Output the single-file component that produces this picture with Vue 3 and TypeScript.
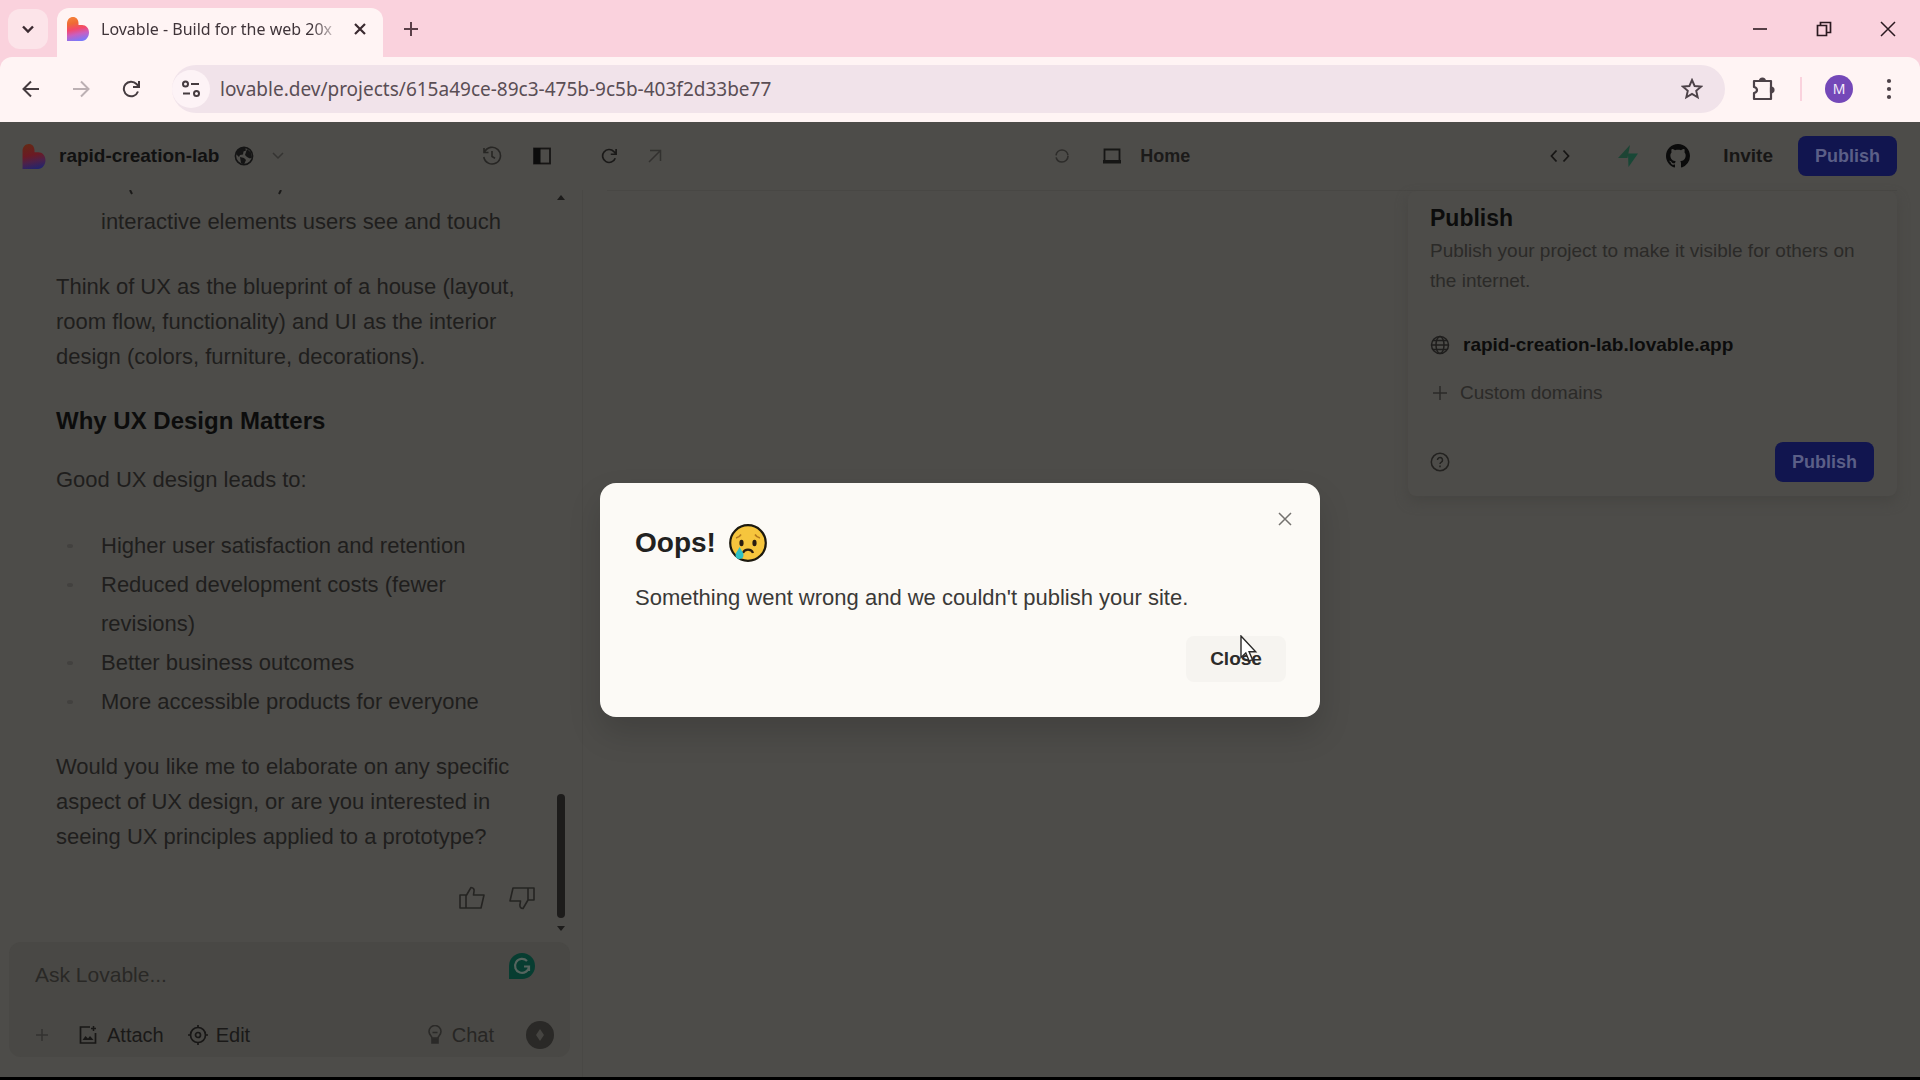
<script setup lang="ts">
import { ref } from 'vue'

const address = ref('lovable.dev/projects/615a49ce-89c3-475b-9c5b-403f2d33be77')
const prompt = ref('')
const dialogOpen = ref(true)

const benefits: string[] = [
  'Higher user satisfaction and retention',
  'Reduced development costs (fewer revisions)',
  'Better business outcomes',
  'More accessible products for everyone',
]
</script>

<template>
  <div class="window">
    <svg width="0" height="0" class="defs" aria-hidden="true">
      <defs>
        <linearGradient id="heart" x1="0.3" y1="0" x2="0.5" y2="1">
          <stop offset="0" stop-color="#f5803a" />
          <stop offset="0.25" stop-color="#ee6a35" />
          <stop offset="0.5" stop-color="#f4486c" />
          <stop offset="0.72" stop-color="#c95fc0" />
          <stop offset="1" stop-color="#7a78fa" />
        </linearGradient>
        <linearGradient id="heartDim" x1="0.3" y1="0" x2="0.5" y2="1">
          <stop offset="0" stop-color="#652815" />
          <stop offset="0.45" stop-color="#6b1a24" />
          <stop offset="0.7" stop-color="#4e2148" />
          <stop offset="1" stop-color="#25246b" />
        </linearGradient>
      </defs>
    </svg>

    <div class="tabstrip">
      <button class="tab-search" aria-label="Search tabs">
        <svg width="14" height="14" viewBox="0 0 14 14"><path d="M2 4.500l5 5 5-5" fill="none" stroke="#3a2a30" stroke-width="2.400" /></svg>
      </button>
      <div class="tab">
        <svg width="22" height="24" viewBox="0 0 22 24"><path d="M0 6.500C0 2.700 2.700 0 6 0s5.500 2.500 5.500 6.500V8h3.600C19 8 22 11.200 22 15.600S19 24 15 24H0z" fill="url(#heart)" /></svg>
        <span class="tab-title">Lovable - Build for the web 20x</span>
        <button class="plain" aria-label="Close tab">
          <svg width="14" height="14" viewBox="0 0 14 14"><path d="M2 2l10 10M12 2L2 12" stroke="#3a2a30" stroke-width="2.200" /></svg>
        </button>
      </div>
      <button class="plain new-tab" aria-label="New tab">
        <svg width="16" height="16" viewBox="0 0 16 16"><path d="M8 1v14M1 8h14" stroke="#5a3f48" stroke-width="2" /></svg>
      </button>
      <div class="win-buttons">
        <button class="plain" aria-label="Minimize"><svg width="16" height="16" viewBox="0 0 16 16"><path d="M1 8h14" stroke="#2b1a20" stroke-width="1.600" /></svg></button>
        <button class="plain" aria-label="Restore"><svg width="16" height="16" viewBox="0 0 16 16"><path d="M1.500 4.500h9v10h-9zM4.500 4.500v-3h10v10h-4" fill="none" stroke="#2b1a20" stroke-width="1.700" /></svg></button>
        <button class="plain" aria-label="Close window"><svg width="16" height="16" viewBox="0 0 16 16"><path d="M1 1l14 14M15 1L1 15" stroke="#2b1a20" stroke-width="1.500" /></svg></button>
      </div>
    </div>

    <div class="toolbar">
      <div class="nav">
        <button class="plain" aria-label="Back"><svg width="18" height="18" viewBox="0 0 18 18"><path d="M17 9H2M9 1.500L1.500 9 9 16.500" fill="none" stroke="#453b3f" stroke-width="2" /></svg></button>
        <button class="plain" aria-label="Forward"><svg width="18" height="18" viewBox="0 0 18 18"><path d="M1 9h15M9 1.500L16.500 9 9 16.500" fill="none" stroke="#bcb0b3" stroke-width="2" /></svg></button>
        <button class="plain" aria-label="Reload"><svg width="18" height="18" viewBox="0 0 18 18"><path d="M16 11.500A7.300 7.300 0 1 1 14.500 4L17 6.500M17 1v6h-6" fill="none" stroke="#453b3f" stroke-width="2" /></svg></button>
      </div>
      <div class="omnibox">
        <button class="site-info" aria-label="Site information">
          <svg width="20" height="18" viewBox="0 0 20 18" fill="none" stroke="#453b3f" stroke-width="2"><circle cx="4.500" cy="4" r="2.500" /><path d="M10 4h8M2 13.500h7" /><circle cx="15.500" cy="13.500" r="2.500" /></svg>
        </button>
        <input v-model="address" class="url" aria-label="Address" />
        <button class="plain" aria-label="Bookmark"><svg width="22" height="22" viewBox="0 0 22 22"><path d="M11 2l2.600 6 6.600.5-5 4.300 1.500 6.500L11 15.900l-5.700 3.400 1.500-6.500-5-4.300 6.600-.5z" fill="none" stroke="#4d4248" stroke-width="1.900" /></svg></button>
      </div>
      <div class="extras">
        <button class="plain" aria-label="Extensions"><svg width="24" height="24" viewBox="0 0 24 24" fill="none" stroke="#4d4248" stroke-width="2.200" stroke-linejoin="round"><path d="M2 4h17v18H2v-6c4-1 4-5 0-6z" /><path d="M8 4a2.500 2.500 0 0 1 5 0zM19 10.500a2.500 2.500 0 0 1 0 5z" fill="#4d4248" /></svg></button>
        <span class="divider"></span>
        <button class="avatar" aria-label="Profile">M</button>
        <button class="plain menu" aria-label="Menu"><svg width="6" height="22" viewBox="0 0 6 22" fill="#4d4248"><circle cx="3" cy="3" r="2.100" /><circle cx="3" cy="11" r="2.100" /><circle cx="3" cy="19" r="2.100" /></svg></button>
      </div>
    </div>

    <main class="page">
      <header class="head">
        <div class="head-left">
          <svg width="24" height="25" viewBox="0 0 22 24"><path d="M0 6.500C0 2.700 2.700 0 6 0s5.500 2.500 5.500 6.500V8h3.600C19 8 22 11.200 22 15.600S19 24 15 24H0z" fill="url(#heartDim)" /></svg>
          <span class="project">rapid-creation-lab</span>
          <svg class="earth" width="20" height="20" viewBox="0 0 20 20"><circle cx="10" cy="10" r="8.600" fill="none" stroke="#151515" stroke-width="1.600" /><path d="M2 8C3 3 7 1 11 1.500l1 3-2.500 1L9 8.500 6 9l-1 2zM13 3l4 3.500 1 5-2 1-3-1.500-2-2 1-3zM6 11l4 1 2 2-2 4.500-3-1.500z" fill="#151515" /></svg>
          <svg class="caret" width="12" height="8" viewBox="0 0 12 8"><path d="M1 1l5 5 5-5" fill="none" stroke="#353432" stroke-width="1.500" /></svg>
          <button class="plain push" aria-label="History"><svg width="20" height="20" viewBox="0 0 20 20" fill="none" stroke="#272624" stroke-width="1.600"><path d="M2.500 6a8.400 8.400 0 1 1-.7 5M2 2v4.500h4.500" /><path d="M10 5v5.500l3 1.800" /></svg></button>
          <button class="plain" aria-label="Toggle panel"><svg width="18" height="18" viewBox="0 0 18 18"><rect x="1" y="1.500" width="16" height="15" fill="none" stroke="#171615" stroke-width="1.800" /><path d="M1 1h6.500v16H1z" fill="#0c0c0c" /></svg></button>
        </div>
        <div class="head-mid">
          <button class="plain" aria-label="Refresh preview"><svg width="16" height="16" viewBox="0 0 18 18"><path d="M16 11.500A7.300 7.300 0 1 1 14.500 4L17 6.500M17 1v6h-6" fill="none" stroke="#1a1918" stroke-width="1.900" /></svg></button>
          <button class="plain ext" aria-label="Open preview"><svg width="14" height="14" viewBox="0 0 14 14"><path d="M2 1.500h10.500V12M12.500 1.500L1 13" fill="none" stroke="#32312f" stroke-width="1.500" /></svg></button>
          <svg class="spin" width="16" height="16" viewBox="0 0 16 16"><circle cx="8" cy="8" r="6" fill="none" stroke="#2d2c2a" stroke-width="1.600" stroke-dasharray="17 2" /></svg>
          <svg class="screen" width="18" height="16" viewBox="0 0 18 16"><path d="M1.500 1.500h15v12h-15z" fill="none" stroke="#161615" stroke-width="1.800" /><path d="M0 12h18v3.500H0z" fill="#161615" /></svg>
          <span class="route">Home</span>
        </div>
        <div class="head-right">
          <button class="plain" aria-label="Code"><svg width="20" height="14" viewBox="0 0 20 14"><path d="M6.500 1.500L1.500 7l5 5.500M13.500 1.500l5 5.500-5 5.500" fill="none" stroke="#171615" stroke-width="1.800" /></svg></button>
          <button class="plain bolt" aria-label="Supabase"><svg width="22" height="22" viewBox="0 0 22 22"><path d="M13 0L1 13h9.500z" fill="#1d4434" /><path d="M11.500 22L21 8.500H11z" fill="#194736" /></svg></button>
          <button class="plain" aria-label="GitHub"><svg width="24" height="24" viewBox="0 0 16 16"><path fill="#0b0b0b" d="M8 0C3.580 0 0 3.580 0 8c0 3.540 2.290 6.530 5.470 7.590.4.070.55-.17.55-.38 0-.19-.01-.82-.01-1.490-2.010.37-2.530-.49-2.690-.94-.09-.23-.48-.94-.82-1.130-.28-.15-.68-.52-.01-.53.63-.01 1.080.58 1.230.82.72 1.210 1.870.87 2.330.66.070-.52.28-.87.51-1.070-1.780-.2-3.640-.89-3.640-3.950 0-.87.31-1.590.82-2.150-.08-.2-.36-1.020.08-2.120 0 0 .67-.21 2.200.82.64-.18 1.320-.27 2-.27s1.360.09 2 .27c1.530-1.040 2.200-.82 2.200-.82.44 1.100.16 1.920.08 2.120.51.56.82 1.270.82 2.150 0 3.070-1.870 3.750-3.650 3.950.29.25.54.73.54 1.480 0 1.070-.01 1.930-.01 2.200 0 .21.15.46.55.38A8.010 8.010 0 0 0 16 8c0-4.420-3.580-8-8-8z" /></svg></button>
          <button class="plain invite">Invite</button>
          <button class="primary">Publish</button>
        </div>
      </header>

      <div class="body">
        <aside class="chat">
          <div class="scroller">
            <article class="message">
              <svg class="clipped" width="200" height="12" viewBox="0 0 200 12" aria-hidden="true"><path d="M29 0l2 4M178 4l2-4" stroke="#1b1a19" stroke-width="2" /></svg>
              <ul><li>interactive elements users see and touch</li></ul>
              <p>Think of UX as the blueprint of a house (layout, room flow, functionality) and UI as the interior design (colors, furniture, decorations).</p>
              <h3>Why UX Design Matters</h3>
              <p class="lead">Good UX design leads to:</p>
              <ul class="dots"><li v-for="b in benefits" :key="b">{{ b }}</li></ul>
              <p>Would you like me to elaborate on any specific aspect of UX design, or are you interested in seeing UX principles applied to a prototype?</p>
              <div class="votes">
                <button class="plain" aria-label="Good response"><svg width="26" height="24" viewBox="0 0 26 24" fill="none" stroke="#252422" stroke-width="1.600" stroke-linejoin="round"><path d="M1 9h6v13H1zM7 10l5-8.500c2.500 0 3.500 2 3 4L14.500 9H25l-3 13H7" /></svg></button>
                <button class="plain" aria-label="Bad response"><svg width="26" height="24" viewBox="0 0 26 24" fill="none" stroke="#252422" stroke-width="1.600" stroke-linejoin="round"><path d="M25 2h-6v12h6zM19 14l-5 8.500c-2.500 0-3.500-2-3-4l.5-3.500H1L4 2h15" /></svg></button>
              </div>
            </article>
            <div class="track" aria-hidden="true">
              <i class="up"></i>
              <i class="thumb"></i>
              <i class="down"></i>
            </div>
          </div>

          <form class="composer" @submit.prevent>
            <div class="composer-top">
              <input v-model="prompt" class="ask" placeholder="Ask Lovable..." aria-label="Ask Lovable" />
              <svg width="26" height="26" viewBox="0 0 26 26"><path d="M13 0a13 13 0 1 1 0 26H0V13A13 13 0 0 1 13 0z" fill="#073d31" /><path d="M18 8a7 7 0 1 0 2 5.500h-5M20 13.500V18" fill="none" stroke="#55645e" stroke-width="2.200" /></svg>
            </div>
            <div class="composer-row">
              <button class="plain" aria-label="Add"><svg width="14" height="14" viewBox="0 0 14 14"><path d="M7 1v12M1 7h12" stroke="#333230" stroke-width="1.500" /></svg></button>
              <button class="plain tool attach"><svg width="18" height="20" viewBox="0 0 18 20"><path d="M11 2H1.500v16h15V8" fill="none" stroke="#181716" stroke-width="1.700" /><path d="M14.500 1v5M12 3.500h5" stroke="#181716" stroke-width="1.500" /><path d="M3.500 15l3-4 2.500 2.500 2-2.500 3.500 4z" fill="#181716" /></svg>Attach</button>
              <button class="plain tool edit"><svg width="20" height="20" viewBox="0 0 20 20" fill="none" stroke="#181716" stroke-width="1.700"><circle cx="10" cy="10" r="7.500" /><circle cx="10" cy="10" r="2.500" /><path d="M10 0v3M10 17v3M0 10h3M17 10h3" /></svg>Edit</button>
              <button class="plain tool talk"><svg width="14" height="20" viewBox="0 0 14 20" fill="none" stroke="#2b2a28" stroke-width="1.600"><path d="M4 13c0-2-3-3-3-6.500a6 6 0 0 1 12 0C13 10 10 11 10 13zM4.500 7.500h5" /><path d="M4 14h6v4H4z" fill="#2b2a28" /></svg>Chat</button>
              <button class="send" aria-label="Send"><svg width="8" height="12" viewBox="0 0 8 12"><path d="M4 0l4 6-4 6-4-6z" fill="#454441" /></svg></button>
            </div>
          </form>
        </aside>

        <section class="preview">
          <div class="popover">
            <h2>Publish</h2>
            <p class="desc">Publish your project to make it visible for others on the internet.</p>
            <a class="domain" href="#"><svg width="20" height="20" viewBox="0 0 20 20" fill="none" stroke="#1f1e1d" stroke-width="1.500"><circle cx="10" cy="10" r="8.500" /><ellipse cx="10" cy="10" rx="4" ry="8.500" /><path d="M1.500 10h17M3 5.500h14M3 14.500h14" /></svg>rapid-creation-lab.lovable.app</a>
            <button class="plain custom"><svg width="16" height="16" viewBox="0 0 16 16"><path d="M8 1v14M1 8h14" stroke="#2b2a28" stroke-width="1.500" /></svg>Custom domains</button>
            <div class="pop-foot">
              <button class="plain" aria-label="Help"><svg width="20" height="20" viewBox="0 0 20 20" fill="none" stroke="#22211f" stroke-width="1.500"><circle cx="10" cy="10" r="8.700" /><path d="M7.500 8a2.500 2.500 0 1 1 3.800 2.100c-.9.500-1.300.9-1.300 2M10 13.500v1.700" /></svg></button>
              <button class="primary">Publish</button>
            </div>
          </div>
        </section>
      </div>

      <div v-if="dialogOpen" class="overlay">
        <div class="dialog" role="alertdialog" aria-labelledby="oops" aria-describedby="oops-text">
          <button class="plain dismiss" aria-label="Dismiss" @click="dialogOpen = false"><svg width="14" height="14" viewBox="0 0 14 14"><path d="M1 1l12 12M13 1L1 13" stroke="#74726f" stroke-width="1.500" /></svg></button>
          <div class="dialog-title">
            <h1 id="oops">Oops!</h1>
            <svg width="38" height="38" viewBox="0 0 38 38">
              <circle cx="19" cy="19" r="17.800" fill="#f6c53d" stroke="#1c190f" stroke-width="2.200" />
              <path d="M7 14c2-.5 4-1.700 5-3.500M31 14c-2-.5-4-1.700-5-3.500" fill="none" stroke="#b47a1e" stroke-width="1.600" />
              <ellipse cx="12.500" cy="19" rx="2.100" ry="3.300" fill="#2a1c10" /><ellipse cx="25.500" cy="19" rx="2.100" ry="3.300" fill="#2a1c10" />
              <path d="M14 29c1.500-4.500 8.500-4.500 10 0" fill="none" stroke="#2a1c10" stroke-width="2.200" />
              <path d="M10.500 23c2 3.500 4 5.500 4 8a4 4 0 0 1-8 0c0-2.500 2.500-4.500 4-8z" fill="#2fc0c4" />
            </svg>
          </div>
          <p id="oops-text">Something went wrong and we couldn't publish your site.</p>
          <button class="close" @click="dialogOpen = false">
            Close
            <svg class="pointer" width="18" height="28" viewBox="0 0 18 28"><path d="M1 1v21.500l4.800-4.500 3.400 8 3.300-1.400-3.400-7.800h6.600z" fill="#fff" stroke="#2a2928" stroke-width="1.400" /></svg>
          </button>
        </div>
      </div>
    </main>
  </div>
</template>

<style>
body {
  margin: 0;
}
</style>

<style scoped>
* {
  box-sizing: border-box;
}
.window {
  height: 100vh;
  display: flex;
  flex-direction: column;
  overflow: hidden;
  border-bottom: 3px solid #000;
  background: #fad2dd;
  font-family: "Liberation Sans", Arial, sans-serif;
  font-size: 19px;
}
.defs {
  position: absolute;
}
svg {
  display: block;
  flex: none;
}
button,
input {
  font: inherit;
  color: inherit;
}
.plain {
  display: flex;
  align-items: center;
  border: 0;
  padding: 0;
  background: none;
}
h1,
h2,
h3,
p,
ul {
  margin: 0;
  padding: 0;
}

/* Browser chrome */
.tabstrip {
  height: 57px;
  flex: none;
  display: flex;
  align-items: center;
  padding: 0 24px 0 8px;
  font-family: "Noto Sans", "Open Sans", sans-serif;
}
.tab-search {
  width: 40px;
  height: 40px;
  display: grid;
  place-items: center;
  padding: 0;
  border: 0;
  border-radius: 12px;
  background: #fce4e9;
}
.tab {
  align-self: flex-end;
  width: 326px;
  height: 49px;
  margin-left: 9px;
  padding: 0 16px 8px 10px;
  display: flex;
  align-items: center;
  gap: 12px;
  border-radius: 12px 12px 0 0;
  background: #fff4f4;
}
.tab-title {
  flex: 1;
  font-size: 16px;
  color: #3f3439;
  white-space: nowrap;
  mask-image: linear-gradient(90deg, #000 88%, transparent);
}
.new-tab {
  margin-left: 20px;
}
.win-buttons {
  margin-left: auto;
  display: flex;
  gap: 48px;
}
.toolbar {
  height: 65px;
  flex: none;
  display: flex;
  align-items: center;
  padding: 0 28px 2px 22px;
  border-radius: 12px 12px 0 0;
  background: #fff4f4;
  font-family: "Noto Sans", "Open Sans", sans-serif;
}
.nav {
  display: flex;
  gap: 32px;
  margin-right: 32px;
}
.omnibox {
  flex: 1;
  height: 48px;
  display: flex;
  align-items: center;
  padding: 0 22px 0 0;
  border-radius: 24px;
  background: #f1e3ea;
}
.site-info {
  width: 38px;
  height: 38px;
  display: grid;
  place-items: center;
  padding: 0;
  border: 0;
  border-radius: 50%;
  background: #fdf3f6;
}
.url {
  flex: 1;
  margin-left: 10px;
  padding: 0;
  border: 0;
  outline: 0;
  background: none;
  font-size: 19px;
  color: #5a4e55;
}
.extras {
  display: flex;
  align-items: center;
  margin-left: 27px;
}
.divider {
  width: 2px;
  height: 24px;
  margin: 0 23px 0 24px;
  background: #fad2dd;
}
.avatar {
  width: 28px;
  height: 28px;
  padding: 0;
  border: 0;
  border-radius: 50%;
  background: #7448b8;
  color: #f3ebfa;
  font-size: 14px;
  line-height: 28px;
}
.menu {
  margin-left: 33px;
}

/* Dimmed app */
.page {
  flex: 1;
  min-height: 0;
  position: relative;
  display: flex;
  flex-direction: column;
  background: #4d4c49;
  color: #1f1e1d;
}
.head {
  height: 68px;
  flex: none;
  display: flex;
  align-items: center;
}
.head-left {
  width: 31%;
  display: flex;
  align-items: center;
  padding: 0 44px 0 22px;
}
.project {
  margin-left: 13px;
  font-weight: 700;
  color: #111;
}
.earth {
  margin-left: 15px;
}
.caret {
  margin-left: 18px;
}
.push {
  margin: 0 31px 0 auto;
}
.head-mid {
  flex: 1;
  display: flex;
  align-items: center;
  padding-left: 6px;
}
.ext {
  margin-left: 31px;
}
.spin {
  margin-left: 392px;
}
.screen {
  margin-left: 33px;
}
.route {
  margin-left: 19px;
  font-size: 18px;
  font-weight: 700;
  color: #1b1a19;
}
.head-right {
  display: flex;
  align-items: center;
  padding-right: 23px;
}
.bolt {
  margin: 0 27px 0 47px;
}
.invite {
  margin: 0 25px 0 33px;
  font-weight: 700;
  color: #171615;
}
.primary {
  height: 40px;
  padding: 0 17px;
  border: 0;
  border-radius: 8px;
  background: #11154f;
  color: #5b5f87;
  font-size: 18px;
  font-weight: 700;
}
.body {
  flex: 1;
  min-height: 0;
  display: flex;
}
.chat {
  width: 583px;
  flex: none;
  display: flex;
  flex-direction: column;
  padding: 0 12px 20px 9px;
  border-right: 1px solid #494845;
}
.scroller {
  flex: 1;
  min-height: 0;
  display: flex;
}
.message {
  flex: 1;
  padding: 0 17px 0 47px;
  font-size: 22px;
  line-height: 35px;
}
.clipped {
  margin-left: 45px;
}
.message ul {
  padding-left: 45px;
  margin-bottom: 28px;
  list-style: none;
  line-height: 39px;
}
.message .dots li {
  position: relative;
}
.message .dots li::before {
  content: "";
  position: absolute;
  left: -34px;
  top: 18px;
  width: 6px;
  height: 4px;
  border-radius: 50%;
  background: #42413f;
}
.message h3 {
  margin: 32px 0 26px;
  font-size: 24px;
  line-height: 30px;
  color: #0c0c0c;
}
.message .lead {
  margin-bottom: 29px;
}
.votes {
  display: flex;
  justify-content: flex-end;
  gap: 24px;
  margin-top: 32px;
}
.track {
  width: 18px;
  display: flex;
  flex-direction: column;
  align-items: center;
  justify-content: flex-end;
  padding: 5px 0 11px;
}
.up,
.down {
  width: 8px;
  height: 5px;
  background: #1d1c1b;
}
.up {
  margin-bottom: auto;
  clip-path: polygon(50% 0, 100% 100%, 0 100%);
}
.down {
  margin-top: 8px;
  clip-path: polygon(0 0, 100% 0, 50% 100%);
}
.thumb {
  width: 8px;
  height: 124px;
  border-radius: 4px;
  background: #1d1c1b;
}
.composer {
  height: 115px;
  display: flex;
  flex-direction: column;
  justify-content: space-between;
  padding: 11px 16px 8px 26px;
  border-radius: 12px;
  background: #494845;
}
.composer-top {
  display: flex;
  padding-right: 19px;
}
.ask {
  flex: 1;
  min-width: 0;
  padding: 10px 0 0;
  border: 0;
  outline: 0;
  background: none;
  font-size: 21px;
}
.ask::placeholder {
  color: #292826;
  opacity: 1;
}
.composer-row {
  display: flex;
  align-items: center;
}
.tool {
  gap: 10px;
  font-size: 20px;
  color: #1a1918;
}
.attach {
  margin-left: 30px;
}
.edit {
  margin-left: 24px;
  gap: 8px;
}
.talk {
  margin-left: auto;
  color: #272624;
}
.send {
  width: 28px;
  height: 28px;
  display: grid;
  place-items: center;
  margin-left: 32px;
  padding: 0;
  border: 0;
  border-radius: 50%;
  background: #2a2927;
}
.preview {
  flex: 1;
  display: flex;
  justify-content: flex-end;
  align-items: flex-start;
  margin: 0 23px 0 24px;
  border-top: 1px solid #484744;
}
.popover {
  width: 489px;
  padding: 13px 23px 14px 22px;
  border-radius: 8px;
  box-shadow: 0 6px 12px #474643;
  background: #4d4c49;
}
.popover h2 {
  font-size: 23px;
  line-height: 28px;
  color: #0c0c0c;
}
.desc {
  padding-top: 4px;
  line-height: 30px;
  color: #2b2a28;
}
.domain {
  display: flex;
  align-items: center;
  gap: 13px;
  margin-top: 34px;
  line-height: 30px;
  font-weight: 700;
  color: #0c0c0c;
  text-decoration: none;
}
.custom {
  gap: 12px;
  margin: 18px 0 0 2px;
  line-height: 30px;
  color: #2b2a28;
}
.pop-foot {
  display: flex;
  align-items: center;
  justify-content: space-between;
  margin-top: 34px;
}

/* Error dialog */
.overlay {
  position: absolute;
  inset: 0;
  display: grid;
  place-items: center;
}
.dialog {
  position: relative;
  width: 720px;
  padding: 41px 34px 35px 35px;
  display: flex;
  flex-direction: column;
  border-radius: 16px;
  background: #fcfaf6;
  box-shadow: 0 16px 32px rgba(0, 0, 0, 0.15);
  color: #3a3937;
  font-size: 22px;
}
.dialog-title {
  display: flex;
  align-items: center;
  gap: 13px;
}
.dialog-title h1 {
  font-size: 28px;
  line-height: 38px;
  color: #222120;
}
.dismiss {
  position: absolute;
  top: 29px;
  right: 28px;
}
.dialog p {
  margin-top: 20px;
  line-height: 32px;
}
.close {
  align-self: flex-end;
  position: relative;
  width: 100px;
  height: 46px;
  margin-top: 22px;
  border: 0;
  border-radius: 8px;
  background: #f6f4f0;
  color: #2c2b2a;
  font-size: 19px;
  font-weight: 700;
}
.pointer {
  position: absolute;
  left: 54px;
  top: -1px;
}
</style>
